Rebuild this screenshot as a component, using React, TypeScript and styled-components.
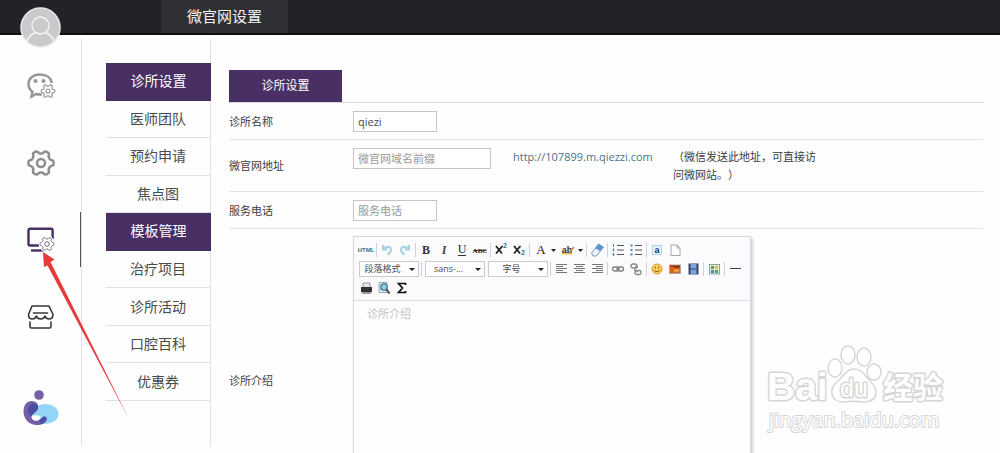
import React from 'react';
import styled, { createGlobalStyle, css } from 'styled-components';

const PURPLE = '#483065';
const LINE = '#e2e0e8';

const GlobalStyle = createGlobalStyle`
  *, *::before, *::after { box-sizing: border-box; }
  body {
    margin: 0;
    background: #fefefe;
    color: #4a4a4a;
    font-family: "Open Sans", "Noto Sans CJK SC", sans-serif;
    font-size: 11px;
    line-height: 18px;
  }
  button, input, select, textarea { font: inherit; color: inherit; margin: 0; }
`;

const Page = styled.div`
  position: relative;
  display: flex;
  flex-direction: column;
  height: 100vh;
  overflow: hidden;
`;

const TopBar = styled.header`
  display: flex;
  flex: none;
  height: 35px;
  padding-left: 161px;
  background: #232227;
  border-bottom: 2px solid #0f0e12;
`;

const TopTab = styled.a`
  width: 127px;
  background: #2f3035;
  color: #f2f2f2;
  font-size: 15px;
  line-height: 32px;
  text-align: center;
  text-decoration: none;
`;

const Avatar = styled.button`
  position: absolute;
  top: 7px;
  left: 20px;
  width: 41px;
  height: 41px;
  padding: 0;
  border: 0;
  background: none;
  svg { display: block; }
`;

const Body = styled.div`
  display: flex;
  flex: 1;
  min-height: 0;
`;

const IconRail = styled.nav`
  display: flex;
  flex: none;
  flex-direction: column;
  width: 82px;
  margin: 4px 0 7px;
  padding-top: 8px;
  border-right: 1px solid ${LINE};
`;

const RailButton = styled.button<{ $active?: boolean }>`
  display: flex;
  flex: none;
  align-items: center;
  justify-content: center;
  position: relative;
  height: 77px;
  padding: 0;
  border: 0;
  background: none;
  ${p => p.$active && css`
    &::after {
      content: '';
      position: absolute;
      right: 0;
      top: 11px;
      width: 1px;
      height: 55px;
      background: #55505f;
    }
  `}
`;

const BrandLink = styled.a`
  display: flex;
  justify-content: center;
  margin-top: 35px;
`;

const SideMenu = styled.ul`
  display: grid;
  flex: none;
  grid-template-rows: repeat(9, 1fr);
  height: 338px;
  margin: 0;
  padding: 0;
  list-style: none;
`;

const MenuColumn = styled.nav`
  flex: none;
  width: 105px;
  margin: 4px 0 7px 24px;
  padding-top: 24px;
  border-right: 1px solid ${LINE};
`;

const MenuItem = styled.li<{ $active?: boolean }>`
  display: flex;
  margin-right: ${p => (p.$active ? -1 : 0)}px;
  border-bottom: 1px solid ${p => (p.$active ? PURPLE : LINE)};
  background: ${p => (p.$active ? PURPLE : 'transparent')};
  a {
    flex: 1;
    align-self: center;
    color: ${p => (p.$active ? '#fff' : '#4a4a4a')};
    font-size: 14px;
    text-align: center;
    text-decoration: none;
  }
`;

const Content = styled.main`
  flex: 1;
  min-width: 0;
  margin: 35px 17px 0 18px;
`;

const TabStrip = styled.div`
  display: flex;
  border-bottom: 1px solid #d9d7de;
`;

const Tab = styled.button`
  width: 113px;
  height: 32px;
  padding: 0;
  border: 0;
  background: ${PURPLE};
  color: #fff;
  font-size: 12px;
`;

const Row = styled.div`
  display: grid;
  grid-template-columns: 124px 160px 160px 144px;
  align-items: start;
  padding: 8px 0 7px;
  border-bottom: 1px solid ${LINE};
`;

const Label = styled.label`
  align-self: center;
  color: #3c3c3c;
`;

const TextBox = styled.input<{ $wide?: boolean }>`
  width: ${p => (p.$wide ? 138 : 84)}px;
  height: 21px;
  padding: 0 4px;
  border: 1px solid #c9c3d0;
  border-radius: 0;
  background: #fff;
  outline: 0;
  &::placeholder { color: #999; opacity: 1; }
`;

const SiteLink = styled.a`
  color: #4d7188;
  text-decoration: none;
`;

const Note = styled.span`
  color: #3c3c3c;
  text-spacing-trim: space-all;
`;

const EditorRow = styled.div`
  display: grid;
  grid-template-columns: 124px 398px;
  padding: 7px 0;
`;

const Editor = styled.div`
  border: 1px solid #d6d4dc;
  box-shadow: 2px 2px 3px #d4d0da;
`;

const Toolbar = styled.div`
  display: flex;
  flex-direction: column;
  padding: 3px 3px;
  background: #fbfafd;
  border-bottom: 1px solid #dcdae2;
  box-shadow: 0 1px 2px #dcdae2;
`;

const ToolRow = styled.div`
  display: flex;
  align-items: center;
  height: 19px;
`;

const Tool = styled.button<{ $split?: boolean }>`
  display: flex;
  flex: none;
  align-items: center;
  justify-content: center;
  width: ${p => (p.$split ? 27 : 18)}px;
  height: 18px;
  padding: 0;
  border: 0;
  background: none;
`;

const Divider = styled.span`
  flex: none;
  width: 1px;
  height: 14px;
  margin: 0 1px;
  background: #d2d0d8;
`;

const Combo = styled.span`
  position: relative;
  flex: none;
  height: 16px;
  margin: 0 1px 0 2px;
  &::after {
    content: '';
    position: absolute;
    right: 4px;
    top: 7px;
    border: 3px solid transparent;
    border-top: 3px solid #222;
    border-bottom: 0;
    pointer-events: none;
  }
  select {
    display: block;
    width: 60px;
    height: 16px;
    padding: 0 13px 0 0;
    border: 1px solid #cbc9d2;
    border-radius: 0;
    background: #fff;
    appearance: none;
    font-size: 9px;
    line-height: 14px;
    text-align-last: center;
  }
`;

const EditArea = styled.textarea`
  display: block;
  width: 100%;
  height: 224px;
  padding: 4px 13px;
  border: 0;
  outline: 0;
  resize: none;
  background: #fefefe;
  &::placeholder { color: #c4c2c8; opacity: 1; }
`;

const Pointer = styled.svg`
  position: absolute;
  top: 250px;
  left: 40px;
  pointer-events: none;
`;

const Watermark = styled.svg`
  position: absolute;
  right: 46px;
  top: 340px;
  pointer-events: none;
`;

/* Six-lobed cog outline, traced as a wave round a circle. */
function cog(cx: number, cy: number, r: number, depth: number) {
  const pts: string[] = [];
  for (let i = 0; i < 120; i++) {
    const t = (i / 120) * Math.PI * 2;
    const w = Math.tanh(2 * Math.cos(6 * t)) / Math.tanh(2);
    const d = r + depth * w;
    pts.push(`${(cx + d * Math.cos(t)).toFixed(2)} ${(cy + d * Math.sin(t)).toFixed(2)}`);
  }
  return `M${pts.join('L')}Z`;
}

const WechatIcon = () => (
  <svg width="30" height="28" viewBox="0 0 30 28" fill="none">
    <path d="M14 2.500C7 2.500 2.500 6.500 2.500 12c0 3.500 1.600 6 4 8L5.500 24.500l4.500-2.500c2 .5 4 .6 6 .4M14 2.500c6.500 0 11 3.500 11.800 8.500" stroke="#98969a" strokeWidth="2.500" />
    <circle cx="9.500" cy="9" r="2.100" fill="#98969a" />
    <circle cx="17.500" cy="9" r="2.100" fill="#98969a" />
    <path d={cog(22, 19, 5.8, 1)} fill="#fefefe" stroke="#98969a" strokeWidth="1.200" />
    <circle cx="22" cy="19" r="2" stroke="#98969a" strokeWidth="1.200" />
  </svg>
);

const GearIcon = () => (
  <svg width="28" height="28" viewBox="0 0 28 28" fill="none" stroke="#8f8d90" strokeWidth="2.500">
    <path d={cog(14, 14, 11.1, 1.5)} strokeLinejoin="round" />
    <circle cx="14" cy="14" r="4" />
  </svg>
);

const MonitorIcon = () => (
  <svg width="28" height="26" viewBox="0 0 28 26" fill="none" stroke={PURPLE}>
    <path d="M12 18.500H3a1.500 1.500 0 0 1-1.500-1.500V3A1.500 1.500 0 0 1 3 1.800h21A1.500 1.500 0 0 1 25.600 3v9" strokeWidth="2.400" />
    <path d="M4 23.500h12" strokeWidth="2.400" />
    <path d={cog(20, 17, 6, 0.9)} fill="#fefefe" stroke="#fefefe" strokeWidth="3" />
    <path d={cog(20, 17, 6, 0.9)} fill="#fefefe" stroke="#6a6670" />
    <circle cx="20" cy="17" r="2.300" stroke="#6a6670" />
  </svg>
);

const ShopIcon = () => (
  <svg width="28" height="26" viewBox="0 0 28 26" fill="none" stroke="#38363c" strokeWidth="1.600" strokeLinejoin="round" strokeLinecap="round">
    <path d="M5 2h17l4 8.500c0 3-2 4.500-4 4.500s-3.500-1.500-4-3c-.6 1.800-2.200 3-4.300 3s-3.800-1.200-4.300-3c-.6 1.800-2 3-4.200 3S1.500 13.500 1.500 10.500Z" />
    <path d="M6.500 9h14" />
    <path d="M3 18v4.500q0 1.500 1.500 1.500h18q1.500 0 1.500-1.500V18" />
  </svg>
);

const BrandIcon = () => (
  <svg width="36" height="36" viewBox="0 0 36 36">
    <ellipse cx="22.500" cy="24" rx="13" ry="10" fill="#92d5f6" />
    <circle cx="16" cy="5" r="4.800" fill="#7560a8" />
    <path d="M8.500 11C13 11 16 14 15 18c-.8 4-6 5.500-6.500 9 .3 3 4 4.500 7 3.500 2-.8 3-3.500 5.500-4 2-.2 3.300 1.500 2.500 3.500C22 33.500 18 35.500 13 35 5 34.500.5 28 .5 21.500.5 15 4 11 8.500 11Z" fill="#7560a8" />
    <path d="M10 13.500c3.500-.5 5.800 2 5 5-1 3.500-5.500 4.500-6.500 8C4 23 3 15.500 10 13.500Z" fill="#484fa5" />
    <path d="M16 30.500c2-1 3-3.600 5-4 2-.2 3.300 1.500 2.500 3.500-1 2-3 3.500-5.500 4.200Z" fill="#4e4fa0" />
    <path d="M8.500 27.500c1-2.500 5-2.800 8-1.500 2 .8 1 3-1 4-3 1.300-6.500 0-7-2.500Z" fill="#fefefe" />
  </svg>
);

const Glyph = ({ children }: { children: React.ReactNode }) => (
  <svg width="16" height="16" viewBox="0 0 16 16" fill="none">{children}</svg>
);

const serif = '"Liberation Serif", serif';
const sans = '"Liberation Sans", sans-serif';

const icons: Record<string, React.ReactNode> = {
  html: <text x="8" y="10" fontSize="6" fontWeight="700" textAnchor="middle" fontFamily={sans} fill="#39718b">HTML</text>,
  undo: <path d="M4 3v4.500h4.500M4.500 7C7 3.500 12 4 12 8c0 2-1.500 3.500-3.500 4.500" stroke="#a6d0df" strokeWidth="2" />,
  redo: <path d="M12 3v4.500H7.500M11.500 7C9 3.500 4 4 4 8c0 2 1.500 3.500 3.500 4.500" stroke="#a6d0df" strokeWidth="2" />,
  bold: <text x="8" y="12" fontSize="12" fontWeight="700" textAnchor="middle" fontFamily={serif} fill="#333">B</text>,
  italic: <text x="8" y="12" fontSize="12" fontWeight="700" fontStyle="italic" textAnchor="middle" fontFamily={serif} fill="#444">I</text>,
  underline: (
    <>
      <text x="8" y="11" fontSize="12" textAnchor="middle" fontFamily={serif} fill="#222">U</text>
      <path d="M4 13.500h8" stroke="#333" />
    </>
  ),
  strike: (
    <>
      <text x="8" y="11" fontSize="7" fontWeight="700" textAnchor="middle" fontFamily={serif} fill="#222">ABC</text>
      <path d="M1.500 8.500h13" stroke="#333" />
    </>
  ),
  sup: (
    <>
      <path d="M3 4l6 7.500M9.500 4l-6.500 7.500" stroke="#222" strokeWidth="1.800" />
      <text x="10" y="6" fontSize="7" fontWeight="700" fontFamily={sans} fill="#39718b">2</text>
    </>
  ),
  sub: (
    <>
      <path d="M3 4l6 7.500M9.500 4l-6.500 7.500" stroke="#222" strokeWidth="1.800" />
      <text x="10" y="13" fontSize="7" fontWeight="700" fontFamily={sans} fill="#39718b">2</text>
    </>
  ),
  erase: (
    <>
      <path d="M2.500 11l7-9 5 3-7 9H4Z" fill="#e9f2fb" stroke="#7c9bbb" />
      <path d="M6.200 6.300l3.300-4.300 5 3-3.300 4.300Z" fill="#5d94cc" />
    </>
  ),
  ordered: (
    <>
      <path d="M7 3.500h7M7 8h7M7 12.500h7" stroke="#555" />
      <path d="M3.500 2v3M2.500 8h2M2.500 12.500h2M3.500 6.500v3M3.500 11v3" stroke="#4b86b0" />
    </>
  ),
  bullets: (
    <>
      <path d="M7 3.500h7M7 8h7M7 12.500h7" stroke="#555" />
      <path d="M2.500 3.500h2M2.500 8h2M2.500 12.500h2" stroke="#4b86b0" strokeWidth="2" />
    </>
  ),
  selectAll: (
    <>
      <rect x="3.500" y="3.500" width="9" height="9" stroke="#76b3d8" strokeDasharray="1 1" fill="#e4f2fa" />
      <text x="8" y="11" fontSize="9" fontWeight="700" textAnchor="middle" fontFamily={sans} fill="#233a66">a</text>
    </>
  ),
  blank: <path d="M4 3h6l3 3v7.500H4ZM10 3v3h3" fill="#fff" stroke="#a5a5a5" />,
  left: <path d="M3 3.500h11M3 5.500h7M3 7.500h11M3 9.500h7M3 11.500h11" stroke="#777" />,
  center: <path d="M3 3.500h11M5 5.500h7M3 7.500h11M5 9.500h7M3 11.500h11" stroke="#777" />,
  right: <path d="M3 3.500h11M7 5.500h7M3 7.500h11M7 9.500h7M3 11.500h11" stroke="#777" />,
  link: (
    <>
      <rect x="2.500" y="6" width="6" height="4" rx="2" stroke="#808080" strokeWidth="1.300" />
      <rect x="7.500" y="6" width="6" height="4" rx="2" stroke="#808080" strokeWidth="1.300" />
      <path d="M6 8h4" stroke="#777" />
    </>
  ),
  unlink: (
    <>
      <rect x="3" y="3" width="6" height="4" rx="2" stroke="#888" strokeWidth="1.300" />
      <rect x="7" y="9.500" width="6" height="4" rx="2" stroke="#888" strokeWidth="1.300" />
      <path d="M7 5l3 1-4 3 4 2" stroke="#888" />
    </>
  ),
  smile: (
    <>
      <circle cx="8" cy="8" r="5" fill="#ffd25c" stroke="#d9952e" />
      <path d="M6.300 5.500v2M9.700 5.500v2M5 9.500q3 2.500 6 0" stroke="#9c5a12" />
    </>
  ),
  image: (
    <>
      <rect x="2.500" y="4" width="11" height="8.500" fill="#d7641c" stroke="#a9a9a9" />
      <path d="M3 6c4-2 5 3 10 0v-1.500H3Z" fill="#8c2e0c" />
      <path d="M7 8.500h5v2H7Z" fill="#ffb341" />
    </>
  ),
  film: (
    <>
      <rect x="3.500" y="2.500" width="10" height="11" fill="#3a4764" />
      <path d="M5.500 3h6v4.500h-6ZM5.500 8.500h6V13h-6Z" fill="#7fa2dc" />
    </>
  ),
  map: (
    <>
      <rect x="3.500" y="3.500" width="10" height="9.500" fill="#e6efcf" stroke="#83a2ac" />
      <path d="M5 5h3v3H5ZM9 9h3v3H9Z" fill="#58a05d" />
      <path d="M9 5h3v3H9Z" fill="#f0b352" />
      <path d="M5 9h3v3H5Z" fill="#5187b5" />
    </>
  ),
  rule: <path d="M3 7.500h11" stroke="#444" />,
  print: (
    <>
      <path d="M5 3h7v5H5Z" fill="#e5e5e5" stroke="#999" />
      <path d="M3 7h11v5H3Z" fill="#333" />
      <path d="M4 12h9v2H4Z" fill="#999" />
    </>
  ),
  preview: (
    <>
      <path d="M3 2.500h8v10H3Z" fill="#dfeef5" stroke="#8aacba" />
      <circle cx="8" cy="7" r="3.200" fill="#8fd0e2" stroke="#477886" strokeWidth="1.300" />
      <path d="M10.500 9.500l3 4" stroke="#4b3c35" strokeWidth="2" />
    </>
  ),
  sigma: <path d="M11.500 5V3.500H4.500l4 4.500-4 4.500h7V11" stroke="#111" strokeWidth="1.700" />,
};

const ToolIcon = ({ name, title }: { name: string; title: string }) => (
  <Tool type="button" aria-label={title}><Glyph>{icons[name]}</Glyph></Tool>
);

const SplitTool = ({ title, children }: { title: string; children: React.ReactNode }) => (
  <Tool type="button" $split aria-label={title}>
    <svg width="26" height="16" viewBox="0 0 26 16" fill="none">
      {children}
      <path d="M19 7h5l-2.500 3Z" fill="#222" />
    </svg>
  </Tool>
);

const ComboBox = ({ label, value }: { label: string; value: string }) => (
  <Combo>
    <select aria-label={label} defaultValue={value}>
      <option>{value}</option>
    </select>
  </Combo>
);

const menu = [
  { text: '诊所设置', active: true },
  { text: '医师团队' },
  { text: '预约申请' },
  { text: '焦点图' },
  { text: '模板管理', active: true },
  { text: '治疗项目' },
  { text: '诊所活动' },
  { text: '口腔百科' },
  { text: '优惠券' },
];

const EditorToolbar = () => (
  <Toolbar>
    <ToolRow>
      <ToolIcon name="html" title="源代码" />
      <Divider />
      <ToolIcon name="undo" title="撤销" />
      <ToolIcon name="redo" title="重做" />
      <Divider />
      <ToolIcon name="bold" title="加粗" />
      <ToolIcon name="italic" title="斜体" />
      <ToolIcon name="underline" title="下划线" />
      <ToolIcon name="strike" title="删除线" />
      <Divider />
      <ToolIcon name="sup" title="上标" />
      <ToolIcon name="sub" title="下标" />
      <Divider />
      <SplitTool title="字体颜色">
        <text x="9" y="12" fontSize="13" textAnchor="middle" fontFamily={serif} fill="#222">A</text>
      </SplitTool>
      <SplitTool title="背景色">
        <path d="M3 11.500h10" stroke="#f0c060" strokeWidth="2" />
        <text x="8" y="11" fontSize="9" fontWeight="700" textAnchor="middle" fontFamily={sans} fill="#3b2a24">ab</text>
        <path d="M10 11l5-6" stroke="#c98440" strokeWidth="1.500" />
      </SplitTool>
      <Divider />
      <ToolIcon name="erase" title="清除格式" />
      <Divider />
      <ToolIcon name="ordered" title="有序列表" />
      <ToolIcon name="bullets" title="无序列表" />
      <Divider />
      <ToolIcon name="selectAll" title="全选" />
      <ToolIcon name="blank" title="清空文档" />
    </ToolRow>
    <ToolRow>
      <ComboBox label="段落格式" value="段落格式" />
      <Divider />
      <ComboBox label="字体" value="sans-..." />
      <ComboBox label="字号" value="字号" />
      <Divider />
      <ToolIcon name="left" title="居左对齐" />
      <ToolIcon name="center" title="居中对齐" />
      <ToolIcon name="right" title="居右对齐" />
      <Divider />
      <ToolIcon name="link" title="超链接" />
      <ToolIcon name="unlink" title="取消链接" />
      <Divider />
      <ToolIcon name="smile" title="表情" />
      <ToolIcon name="image" title="图片" />
      <ToolIcon name="film" title="视频" />
      <Divider />
      <ToolIcon name="map" title="地图" />
      <Divider />
      <ToolIcon name="rule" title="分隔线" />
    </ToolRow>
    <ToolRow>
      <ToolIcon name="print" title="打印" />
      <ToolIcon name="preview" title="预览" />
      <ToolIcon name="sigma" title="公式" />
    </ToolRow>
  </Toolbar>
);

export default function App() {
  return (
    <Page lang="zh-CN">
      <GlobalStyle />
      <TopBar>
        <TopTab href="#site">微官网设置</TopTab>
      </TopBar>
      <Avatar type="button" aria-label="账号">
        <svg width="41" height="41" viewBox="0 0 41 41" fill="none">
          <circle cx="20.500" cy="20.500" r="19.500" fill="#cbc9cc" stroke="#e9e8ea" strokeWidth="1.500" />
          <circle cx="20.500" cy="18.500" r="8.500" stroke="#f6f5f7" strokeWidth="1.300" />
          <path d="M7 34.500c1.500-5 5-8 9-9M34 34.500c-1.500-5-5-8-9-9" stroke="#f6f5f7" strokeWidth="1.300" />
        </svg>
      </Avatar>
      <Body>
        <IconRail>
          <RailButton type="button" aria-label="微信设置"><WechatIcon /></RailButton>
          <RailButton type="button" aria-label="系统设置"><GearIcon /></RailButton>
          <RailButton type="button" aria-label="微官网" $active><MonitorIcon /></RailButton>
          <RailButton type="button" aria-label="店铺"><ShopIcon /></RailButton>
          <BrandLink href="#home" aria-label="首页"><BrandIcon /></BrandLink>
        </IconRail>
        <MenuColumn>
          <SideMenu>
            {menu.map(m => (
              <MenuItem key={m.text} $active={m.active}>
                <a href="#menu">{m.text}</a>
              </MenuItem>
            ))}
          </SideMenu>
        </MenuColumn>
        <Content>
          <TabStrip>
            <Tab type="button">诊所设置</Tab>
          </TabStrip>
          <Row>
            <Label htmlFor="name">诊所名称</Label>
            <TextBox id="name" defaultValue="qiezi" />
          </Row>
          <Row>
            <Label htmlFor="domain">微官网地址</Label>
            <TextBox id="domain" $wide placeholder="微官网域名前缀" />
            <SiteLink href="#preview">http://107899.m.qiezzi.com</SiteLink>
            <Note>（微信发送此地址，可直接访问微网站。）</Note>
          </Row>
          <Row>
            <Label htmlFor="phone">服务电话</Label>
            <TextBox id="phone" placeholder="服务电话" />
          </Row>
          <EditorRow>
            <Label htmlFor="intro">诊所介绍</Label>
            <Editor>
              <EditorToolbar />
              <EditArea id="intro" placeholder="诊所介绍" />
            </Editor>
          </EditorRow>
        </Content>
      </Body>
      <Pointer width="92" height="172" viewBox="0 0 92 172">
        <path d="M3 2l11.500 7.500-4 2.500L89 169 7.500 15.500 4 17Z" fill="#e8393b" />
      </Pointer>
      <Watermark width="188" height="100" viewBox="0 0 188 100" fill="#fff" stroke="#d6d6d6" strokeWidth="2" strokeLinejoin="round">
        <g strokeWidth="1.500">
          <ellipse cx="69" cy="28" rx="7" ry="9" />
          <ellipse cx="82" cy="15" rx="7" ry="9" />
          <ellipse cx="98" cy="17" rx="7" ry="9" />
          <ellipse cx="108" cy="32" rx="7" ry="8" />
          <path d="M88 29c-8 0-10 7-16 12-5 4-7 8-6 13 1 6 6 8 12 8 7-1 13-1 19 0 7 0 12-3 13-8s-2-9-6-13c-5-5-8-12-16-12Z" />
        </g>
        <g paintOrder="stroke" strokeWidth="3">
          <text x="1" y="60" fontSize="39" fontWeight="700" fontFamily={sans}>Bai</text>
          <text x="88" y="57" fontSize="25" textAnchor="middle" fontFamily={sans}>du</text>
          <text x="117" y="58" fontSize="30" fontWeight="700" fontFamily='"Noto Sans CJK SC", sans-serif'>经验</text>
        </g>
        <text x="3" y="87" fontSize="20" paintOrder="stroke" fontFamily='"Open Sans", sans-serif'>jingyan.baidu.com</text>
      </Watermark>
    </Page>
  );
}
